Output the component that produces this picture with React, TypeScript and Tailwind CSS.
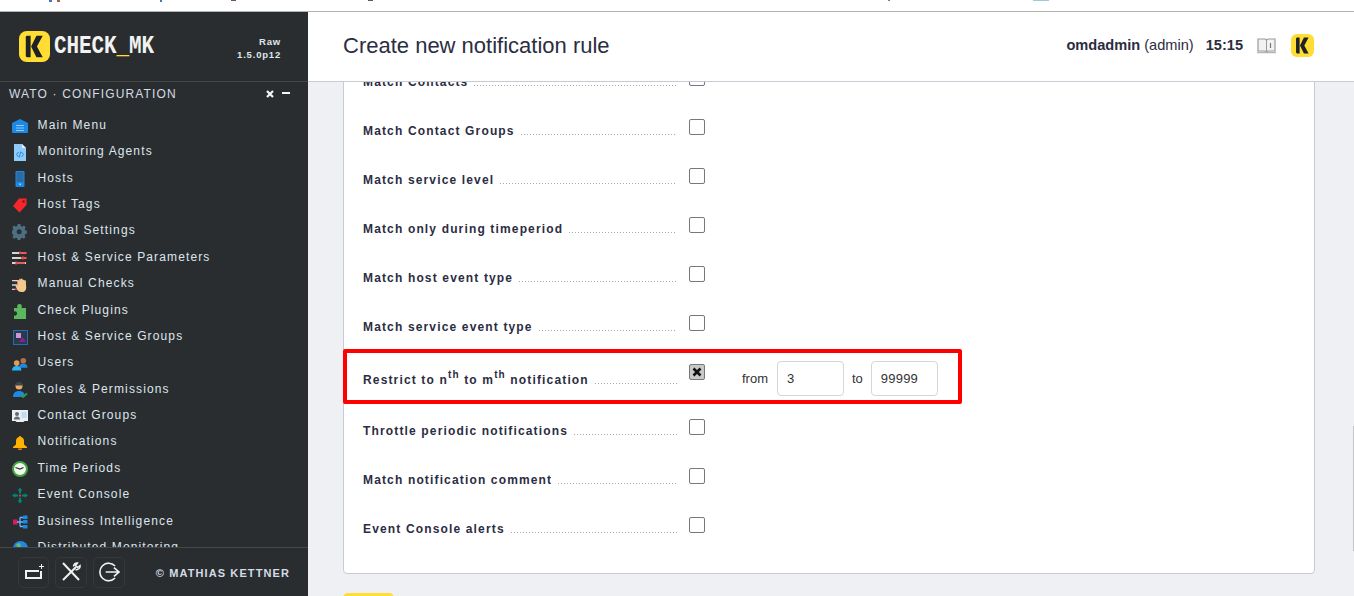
import React from 'react';

const LogoMark = ({ size }: { size: number }) => (
    <svg width={size} height={size} viewBox="0 0 32 32">
        <rect x="0" y="0" width="32" height="32" rx="8" fill="#ffdd33" />
        <path d="M7 6.500A1.500 1.500 0 0 1 8.500 5H12v22H8.500A1.500 1.500 0 0 1 7 25.500z" fill="#1e2224" />
        <path d="M18 5h6.500l-6 11 6 11H18l-5.500-11z" fill="#1e2224" />
    </svg>
);

const icons: Record<string, React.ReactNode> = {
    main: (
        <svg width="16" height="16" viewBox="0 0 16 16">
            <path d="M0 5l8-4 6 3 2 1v9a1 1 0 0 1-1 1H1a1 1 0 0 1-1-1z" fill="#1e88e5" />
            <path d="M4 7.500h8M4 10h8M4 12.500h8" stroke="#90caf9" strokeWidth="1" />
        </svg>
    ),
    agents: (
        <svg width="16" height="17" viewBox="0 0 16 17">
            <path d="M2 0h8l4 4v13H2z" fill="#90caf9" />
            <path d="M10 0l4 4h-4z" fill="#e3f2fd" />
            <path d="M6.500 8L4.500 10.500 6.500 13M9.500 8l2 2.500-2 2.500M8.800 7.500l-1.600 6" fill="none" stroke="#1e88e5" strokeWidth="1" />
        </svg>
    ),
    hosts: (
        <svg width="16" height="16" viewBox="0 0 16 16">
            <rect x="3.500" y="0" width="9" height="16" rx="1" fill="#1e88e5" />
            <path d="M4.500 2h7M4.500 4h7M4.500 6h7M4.500 8h7M4.500 10h7" stroke="#37505c" strokeWidth="1" />
            <rect x="7.500" y="12.500" width="1.500" height="1.500" fill="#bbdefb" />
        </svg>
    ),
    tags: (
        <svg width="16" height="16" viewBox="0 0 16 16">
            <path d="M7 1.500h7.500v6.500l-7 7.500-6.500-6.500z" fill="#f4272b" />
            <circle cx="11.500" cy="4.500" r="1.300" fill="#8e1518" />
        </svg>
    ),
    settings: (
        <svg width="16" height="16" viewBox="0 0 16 16">
            <path d="M6.500 0h3l.5 2.300 1.600.7 2-1.300 2 2-1.200 2 .6 1.600 2 .5v3l-2 .5-.7 1.600 1.200 2-2 2-2-1.200-1.600.6-.4 2.200h-3l-.5-2.200-1.600-.6-2 1.200-2-2 1.200-2-.7-1.600-2.200-.5v-3l2.200-.5.7-1.600-1.200-2 2-2 2 1.300 1.600-.7z" transform="scale(.88) translate(0 0)" fill="#4f6f80" />
            <circle cx="7.200" cy="7.800" r="2.500" fill="#20333c" />
        </svg>
    ),
    params: (
        <svg width="16" height="14" viewBox="0 0 16 14">
            <path d="M0 2h14M0 7h14M0 12h14" stroke="#d5d5d5" strokeWidth="2" />
            <path d="M7 2h8M9 7h6M4 12h9" stroke="#e53935" strokeWidth="1.500" />
            <path d="M8 0v3M11 5v4M4 10v4" stroke="#e53935" strokeWidth="1" />
        </svg>
    ),
    manual: (
        <svg width="18" height="16" viewBox="0 0 18 16">
            <path d="M0 3h7M0 8h6M0 13h5" stroke="#d5d5d5" strokeWidth="1.500" />
            <path d="M3 4h4M3 13h3" stroke="#e53935" strokeWidth="1.200" />
            <path d="M6 8.500V3.500a1 1 0 0 1 2 0V2a1 1 0 0 1 2 0v-.2a1 1 0 0 1 2 0V3a1 1 0 0 1 2 0l1.500-.3.500 8.300c0 3-2 5-5.500 5-2.500 0-4-1.500-5-3.500L4 9.500c-.5-1 .8-1.800 1.500-1z" fill="#f5c78e" />
        </svg>
    ),
    plugins: (
        <svg width="14" height="15" viewBox="0 0 14 15">
            <path d="M1 4h3.500C3.500 2 4.500 0 6.500 0S9.500 2 8.500 4H13v11H1v-3.500C3 12 4 11 4 9.500S3 7 1 7.500z" fill="#5cb85c" />
        </svg>
    ),
    groups: (
        <svg width="15" height="15" viewBox="0 0 15 15">
            <rect x="0.500" y="0.500" width="14" height="14" fill="#2b3a44" stroke="#1e6fc0" strokeWidth="1" />
            <rect x="3" y="3" width="5" height="5" fill="#ce93d8" />
            <path d="M6 12l3.500-5 3.500 5z" fill="#8e1c9e" />
        </svg>
    ),
    users: (
        <svg width="17" height="14" viewBox="0 0 17 14">
            <circle cx="12" cy="3.500" r="3" fill="#b5713f" />
            <path d="M7.500 11c0-3 2-4.500 4.500-4.500s4.500 1.500 4.500 4.500z" fill="#1e88e5" />
            <circle cx="5" cy="6" r="3" fill="#e59a5c" />
            <path d="M0 14c0-3.500 2-5 5-5s5 1.500 5 5z" fill="#29b6f6" />
        </svg>
    ),
    roles: (
        <svg width="16" height="16" viewBox="0 0 16 16">
            <circle cx="7" cy="4" r="3.500" fill="#f0a868" />
            <path d="M3.500 3.500C3.500 1 5 0 7 0s3.500 1 3.500 3.500z" fill="#37474f" />
            <path d="M1 15c0-4 2.500-6 6-6s6 2 6 6z" fill="#1e88e5" />
            <path d="M9 13l2 2 4-3.500" fill="none" stroke="#2e9e4f" strokeWidth="1.800" />
        </svg>
    ),
    contact: (
        <svg width="16" height="13" viewBox="0 0 16 13">
            <path d="M0 0h16v11H12.500L11.500 12H4.500L3.500 11H0z" fill="#eceff1" />
            <circle cx="5" cy="4" r="2" fill="#5d6d75" />
            <path d="M2 9.500c0-2 1.200-3 3-3s3 1 3 3z" fill="#5d6d75" />
            <path d="M9.500 3h5M9.500 5h5M9.500 7h5" stroke="#90caf9" strokeWidth="1" />
        </svg>
    ),
    bell: (
        <svg width="14" height="14" viewBox="0 0 14 14">
            <path d="M7 0c.7 0 1 .5 1 1 2 .5 3 2 3 4v3.500l3 2.500v1H0v-1l3-2.500V5c0-2 1-3.500 3-4 0-.5.300-1 1-1z" fill="#ffb300" />
            <path d="M5 12.500h4a2 2 0 0 1-4 0z" fill="#f57c00" />
        </svg>
    ),
    time: (
        <svg width="16" height="16" viewBox="0 0 16 16">
            <circle cx="8" cy="8" r="7" fill="#f1f8e9" stroke="#43a047" strokeWidth="2" />
            <path d="M3.500 6.500L8 8l3.500-1.500" fill="none" stroke="#263238" strokeWidth="1.200" />
        </svg>
    ),
    event: (
        <svg width="17" height="17" viewBox="0 0 17 17">
            <path d="M8.500 0l-2.500 3.500h1.500v3h2v-3H11zM8.500 17L6 13.500h1.500v-3h2v3H11zM0 8.500l3.500-2.500v1.500h3v2h-3V11zM17 8.500L13.500 6v1.500h-3v2h3V11z" fill="#00897b" />
            <rect x="7.500" y="7.500" width="2" height="2" fill="#e53935" />
        </svg>
    ),
    bi: (
        <svg width="15" height="14" viewBox="0 0 15 14">
            <rect x="0" y="4.500" width="4.500" height="5" fill="#d81b60" />
            <path d="M4 7h3M7 2.500h3M7 7h3M7 11.500h3M7 2.500v9" stroke="#64b5f6" strokeWidth="1.300" fill="none" />
            <rect x="10" y="0.500" width="4.500" height="3.500" fill="#1e88e5" />
            <rect x="10" y="5" width="4.500" height="3.500" fill="#1e88e5" />
            <rect x="10" y="10" width="4.500" height="3.500" fill="#1e88e5" />
        </svg>
    ),
    dist: (
        <svg width="15" height="15" viewBox="0 0 15 15">
            <circle cx="7.500" cy="7.500" r="7.500" fill="#1e88e5" />
            <path d="M3 3l4-1 1 3-3 3zM9 6l4 0 1 3-4 3z" fill="#66bb6a" />
        </svg>
    ),
};

const menu: [string, string][] = [
    ['main', 'Main Menu'],
    ['agents', 'Monitoring Agents'],
    ['hosts', 'Hosts'],
    ['tags', 'Host Tags'],
    ['settings', 'Global Settings'],
    ['params', 'Host & Service Parameters'],
    ['manual', 'Manual Checks'],
    ['plugins', 'Check Plugins'],
    ['groups', 'Host & Service Groups'],
    ['users', 'Users'],
    ['roles', 'Roles & Permissions'],
    ['contact', 'Contact Groups'],
    ['bell', 'Notifications'],
    ['time', 'Time Periods'],
    ['event', 'Event Console'],
    ['bi', 'Business Intelligence'],
    ['dist', 'Distributed Monitoring'],
];

const Sidebar = () => (
    <aside className="w-[308px] shrink-0 h-full bg-[#2a2d2f] flex flex-col">
        <div className="h-[70px] shrink-0 border-b border-[#45484a] flex items-center pl-[19px] pr-[27px]">
            <LogoMark size={31} />
            <span className="ml-[4px] font-['Liberation_Mono'] font-bold text-[21px] tracking-[-0.1px] text-[#f2f2f2] scale-y-[1.25] origin-center leading-none">
                CHECK<span className="text-[#ffdd33]">_</span>MK
            </span>
            <div className="ml-auto text-right text-[9.500px] font-bold text-[#dfe5ec] tracking-[0.8px] leading-[13px] mt-[3px]">
                <div>Raw</div>
                <div>1.5.0p12</div>
            </div>
        </div>
        <div className="h-[24px] shrink-0 flex items-center pl-[9px] pr-[18px] text-[12px] text-[#d3dce6] tracking-[1.15px]">
            <span>WATO · CONFIGURATION</span>
            <span className="ml-auto flex items-center gap-[8px]">
                <svg width="8" height="8" viewBox="0 0 8 8"><path d="M1 1l6 6M7 1L1 7" stroke="#f5f5f5" strokeWidth="2.200" /></svg>
                <span className="w-[8px] h-[2px] bg-[#f5f5f5] mb-[2px]" />
            </span>
        </div>
        <div className="flex-1 min-h-0 overflow-hidden pt-[5.600px] pl-[12px]">
            {menu.map(([icon, label]) => (
                <div key={label} className="h-[26.400px] flex items-center text-[12px] tracking-[1.13px] text-[#dde5ee]">
                    <span className="w-[16px] h-[16px] flex items-center justify-center shrink-0 mt-[3px]">{icons[icon]}</span>
                    <span className="ml-[9.500px]">{label}</span>
                </div>
            ))}
        </div>
        <div className="h-[49px] shrink-0 border-t border-[#45484a] flex items-center pl-[18px] pr-[18px]">
            <div className="flex gap-[6px]">
                <div className="w-[31px] h-[31px] rounded-[5px] border border-[#35383a] flex items-center justify-center">
                    <svg width="22" height="16" viewBox="0 0 22 16" fill="none" stroke="#f0f0f0">
                        <path d="M18 7v7H3V7h13" strokeWidth="2" />
                        <path d="M18.500 0v5M16 2.500h5" strokeWidth="1" />
                    </svg>
                </div>
                <div className="w-[32px] h-[31px] rounded-[5px] border border-[#35383a] flex items-center justify-center">
                    <svg width="20" height="20" viewBox="0 0 20 20" fill="none" stroke="#f0f0f0" strokeWidth="2">
                        <path d="M2 1l16 17" />
                        <path d="M15 5L2 18" />
                        <path d="M12.500 4.500a3.500 3.500 0 0 1 4-3.500L14.500 3.500l2 2 2.500-2a3.500 3.500 0 0 1-4.500 4" strokeWidth="1.500" />
                    </svg>
                </div>
                <div className="w-[32px] h-[31px] rounded-[5px] border border-[#35383a] flex items-center justify-center">
                    <svg width="22" height="22" viewBox="0 0 20 20" fill="none" stroke="#f0f0f0" strokeWidth="1.500">
                        <path d="M15.500 4.500a8 8 0 1 0 0 11" />
                        <path d="M7 10h12M14.500 6l4.500 4-4.500 4" />
                    </svg>
                </div>
            </div>
            <span className="ml-auto text-[11px] font-bold text-[#d3dce6] tracking-[1.1px] mt-[2px]">© MATHIAS KETTNER</span>
        </div>
    </aside>
);

const Row = ({ label, height, pad = 13, children }: { label: React.ReactNode; height: number; pad?: number; children?: React.ReactNode }) => (
    <div className="flex items-start pl-[19px]" style={{ height }}>
        <div className="w-[314px] shrink-0 flex items-baseline whitespace-nowrap text-[12px] font-bold tracking-[1.15px] text-[#2b2d42]" style={{ paddingTop: pad }}>
            <span className="shrink-0">{label}</span>
            <span className="ml-[6px] min-w-0 flex-1 h-[1px] bg-[linear-gradient(to_right,#a4a7b0_1px,transparent_1px)] bg-[length:3px_1px] bg-repeat-x" />
        </div>
        {children}
    </div>
);

const Check = ({ checked }: { checked?: boolean }) => (
    <span className={`ml-[12px] mt-[10px] w-[16px] h-[16px] shrink-0 rounded-[2px] border border-[#77777c] flex items-center justify-center ${checked ? 'bg-[#c8c8c8]' : 'bg-white'}`}>
        {checked && (
            <svg width="10" height="10" viewBox="0 0 10 10">
                <path d="M1.500 1.500l7 7M8.500 1.500l-7 7" stroke="#111" strokeWidth="2.600" />
            </svg>
        )}
    </span>
);

const NumField = ({ value }: { value: string }) => (
    <span className="w-[67px] h-[35px] rounded-[4px] border border-[#d5d6dd] bg-white flex items-center pl-[9px] text-[13px] text-[#333] tracking-[0.2px]">{value}</span>
);

const rowsTop = ['Match Contacts', 'Match Contact Groups', 'Match service level', 'Match only during timeperiod', 'Match host event type', 'Match service event type'];
const rowsBottom = ['Throttle periodic notifications', 'Match notification comment', 'Event Console alerts'];

export default function App() {
    return (
        <div className="relative w-[1354px] h-[596px] overflow-hidden bg-white font-['Liberation_Sans',sans-serif]">
            <div className="h-[12px] border-b border-[#b3b3b3] bg-white" />
            <div className="flex h-[584px]">
                <Sidebar />
                <main className="flex-1 min-w-0 flex flex-col bg-[#eef0f3]">
                    <header className="h-[70px] shrink-0 bg-white border-b border-[#c9cad3] flex items-center pl-[35px] pr-[40px]">
                        <h1 className="text-[22px] text-[#2b2d42] mb-[2px]">Create new notification rule</h1>
                        <div className="ml-auto flex items-center text-[14.600px] text-[#2b2d42] mb-[2px]">
                            <span className="font-bold">omdadmin</span>
                            <span className="ml-[4px]">(admin)</span>
                            <span className="ml-[12px] font-bold">15:15</span>
                            <svg className="ml-[14px]" width="19" height="16" viewBox="0 0 19 16">
                                <path d="M1 1h7l1.500 1L11 1h7v12h-7l-1.500 1L8 13H1z" fill="#f2f2f2" stroke="#9a9a9a" strokeWidth="1.200" />
                                <path d="M0 14.500h19" stroke="#b5b5b5" strokeWidth="1.500" />
                                <path d="M9.500 2v12" stroke="#9a9a9a" />
                                <path d="M13.500 5v5" stroke="#777" strokeWidth="1.200" />
                            </svg>
                            <span className="ml-[15px] flex"><LogoMark size={23} /></span>
                        </div>
                    </header>
                    <div className="flex-1 min-h-0 overflow-hidden pl-[35px] pr-[39px]">
                        <section className="-mt-[23px] h-[515px] bg-white border border-[#c9cad3] rounded-[4px] overflow-hidden">
                            {rowsTop.map(r => (
                                <Row key={r} label={r} height={49}><Check /></Row>
                            ))}
                            <Row height={55} pad={17} label={<>Restrict to n<sup className="text-[10px] -top-[6px]">th</sup> to m<sup className="text-[10px] -top-[6px]">th</sup> notification</>}>
                                <Check checked />
                                <div className="ml-[37px] mt-[7px] flex items-center gap-[8px] text-[13px] text-[#333]">
                                    <span className="mr-[1px]">from</span>
                                    <NumField value="3" />
                                    <span>to</span>
                                    <NumField value="99999" />
                                </div>
                            </Row>
                            {rowsBottom.map(r => (
                                <Row key={r} label={r} height={49}><Check /></Row>
                            ))}
                        </section>
                        <div className="mt-[19px] w-[51px] h-[30px] rounded-[5px] bg-[#ffdd33]" />
                    </div>
                </main>
            </div>
            {/* descenders of the page line cut off above the window */}
            <span className="absolute left-[49px] top-0 w-[3px] h-[2px] bg-[#4a6fc0]" />
            <span className="absolute left-[57px] top-0 w-[3px] h-[2px] bg-[#b05a50]" />
            <span className="absolute left-[160px] top-0 w-[2px] h-[2px] bg-[#4a6fc0]" />
            <span className="absolute left-[231px] top-0 w-[5px] h-[1px] bg-[#66585a]" />
            <span className="absolute left-[368px] top-0 w-[5px] h-[1px] bg-[#66585a]" />
            <span className="absolute left-[888px] top-0 w-[2px] h-[1px] bg-[#808080]" />
            <span className="absolute left-[1033px] top-0 w-[16px] h-[1px] bg-[#9ccbd8]" />
            <span className="absolute right-0 top-[426px] w-[1px] h-[125px] bg-[#c4c5ca]" />
            <div className="absolute left-[343px] top-[349px] w-[619px] h-[55px] border-[4px] border-[#ff0000] rounded-[2px] pointer-events-none" />
        </div>
    );
}
